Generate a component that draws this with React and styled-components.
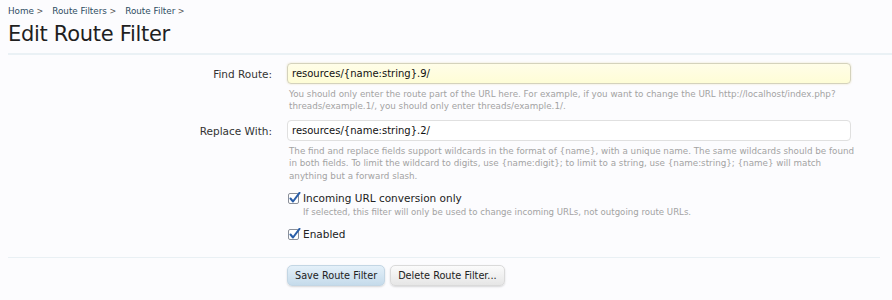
import React, { useState } from "react";
import styled, { createGlobalStyle } from "styled-components";

const GlobalStyle = createGlobalStyle`
  body {
    margin: 0;
    background: #fcfcfe;
    font-family: "DejaVu Sans", Verdana, sans-serif;
  }
`;

const Page = styled.div`
  width: 892px;
  height: 300px;
  overflow: hidden;
  padding: 6px 0 0 8px;
  box-sizing: border-box;
`;

const Crumbs = styled.div`
  display: flex;
  gap: 9px;
  font-size: 8.8px;
  line-height: 11px;
`;

const Crumb = styled.a`
  color: #2f4d63;
  text-decoration: none;
  &::after {
    content: " >";
    color: #555;
    font-size: 8px;
  }
`;

const Title = styled.h1`
  margin: 3px 0 0;
  font-size: 21px;
  line-height: 29px;
  font-weight: normal;
  color: #1f1f1f;
  letter-spacing: -0.3px;
  border-bottom: 2px solid #eaf1f5;
  padding-bottom: 4px;
`;

const Form = styled.form`
  padding-top: 8px;
  margin-right: 12px;
`;

const Row = styled.div`
  display: grid;
  grid-template-columns: 264px 564px;
  column-gap: 15px;
  margin-bottom: ${(p) => p.$gap || 0}px;
`;

const Label = styled.label`
  text-align: right;
  font-size: 10.5px;
  color: #333;
  padding-top: 5px;
`;

const Field = styled.div`
  display: flex;
  flex-direction: column;
`;

const TextInput = styled.input`
  height: 21px;
  box-sizing: border-box;
  border: 1px solid ${(p) => (p.$focus ? "#d4d2bc" : "#e0e0e0")};
  border-radius: 4px;
  background: ${(p) => (p.$focus ? "linear-gradient(#fffde8, #fefdd6)" : "#fff")};
  font-family: inherit;
  font-size: 10px;
  color: #111;
  padding: 0 4px;
  outline: none;
  box-shadow: ${(p) => (p.$focus ? "0 0 2px rgba(220,210,150,0.6)" : "none")};
`;

const Help = styled.p`
  margin: 4px 0 0 2px;
  font-size: 8.75px;
  line-height: 12.4px;
  color: #a3a3a3;
  white-space: nowrap;
`;

const Options = styled.div`
  padding-left: 1px;
  display: flex;
  flex-direction: column;
  gap: 10px;
`;

const CheckRow = styled.label`
  display: grid;
  grid-template-columns: 14px auto;
  column-gap: 1px;
  align-items: center;
  font-size: 10.5px;
  color: #222;
`;

const CheckHelp = styled.div`
  grid-column: 2;
  font-size: 8.6px;
  line-height: 12px;
  color: #a3a3a3;
  margin-top: 2px;
`;

const Box = styled.span`
  width: 11px;
  height: 11px;
  position: relative;
  display: inline-block;
  svg {
    position: absolute;
    left: 0;
    top: -1px;
  }
`;

const Divider = styled.div`
  border-top: 1px solid #e9f0f4;
  margin: 17px 0 0;
  width: 872px;
`;

const Buttons = styled.div`
  display: flex;
  gap: 5px;
  padding: 7px 0 0 279px;
`;

const Button = styled.button`
  height: 21px;
  padding: 0 7px;
  border: 1px solid ${(p) => (p.$primary ? "#c3d6e4" : "#dadada")};
  border-radius: 5px;
  background: ${(p) =>
    p.$primary ? "linear-gradient(#e4f0f9, #c5dbeb)" : "linear-gradient(#fbfbfb, #e6e6e6)"};
  box-shadow: 0 1px 2px rgba(0, 0, 0, 0.15);
  font-family: "DejaVu Sans Condensed", "DejaVu Sans", sans-serif;
  font-size: 10.8px;
  color: #222;
`;

const Check = () => (
  <Box>
    <svg width="13" height="12" viewBox="0 0 13 12">
      <rect x="0.5" y="1.5" width="10" height="10" rx="1.5" fill="#fff" stroke="#8a8f99" />
      <path d="M2.5 6.5 L5 9.5 L11.5 0.8" fill="none" stroke="#2a5ea8" strokeWidth="2" strokeLinecap="round" strokeLinejoin="round" />
    </svg>
  </Box>
);

export default function App() {
  const [find, setFind] = useState("resources/{name:string}.9/");
  const [replace, setReplace] = useState("resources/{name:string}.2/");

  return (
    <Page>
      <GlobalStyle />
      <Crumbs>
        <Crumb href="#">Home</Crumb>
        <Crumb href="#">Route Filters</Crumb>
        <Crumb href="#">Route Filter</Crumb>
      </Crumbs>
      <Title>Edit Route Filter</Title>
      <Form onSubmit={(e) => e.preventDefault()}>
        <Row $gap={7}>
          <Label htmlFor="find">Find Route:</Label>
          <Field>
            <TextInput id="find" $focus value={find} onChange={(e) => setFind(e.target.value)} />
            <Help>
              You should only enter the route part of the URL here. For example, if you want to change the URL http://localhost/index.php?
              <br />
              threads/example.1/, you should only enter threads/example.1/.
            </Help>
          </Field>
        </Row>
        <Row $gap={10}>
          <Label htmlFor="replace">Replace With:</Label>
          <Field>
            <TextInput id="replace" value={replace} onChange={(e) => setReplace(e.target.value)} />
            <Help>
              The find and replace fields support wildcards in the format of {"{name}"}, with a unique name. The same wildcards should be found
              <br />
              in both fields. To limit the wildcard to digits, use {"{name:digit}"}; to limit to a string, use {"{name:string}"}; {"{name}"} will match
              <br />
              anything but a forward slash.
            </Help>
          </Field>
        </Row>
        <Row>
          <span />
          <Options>
            <CheckRow>
              <Check />
              <span>Incoming URL conversion only</span>
              <CheckHelp>If selected, this filter will only be used to change incoming URLs, not outgoing route URLs.</CheckHelp>
            </CheckRow>
            <CheckRow>
              <Check />
              <span>Enabled</span>
            </CheckRow>
          </Options>
        </Row>
      </Form>
      <Divider />
      <Buttons>
        <Button $primary type="submit">Save Route Filter</Button>
        <Button type="button">Delete Route Filter...</Button>
      </Buttons>
    </Page>
  );
}
